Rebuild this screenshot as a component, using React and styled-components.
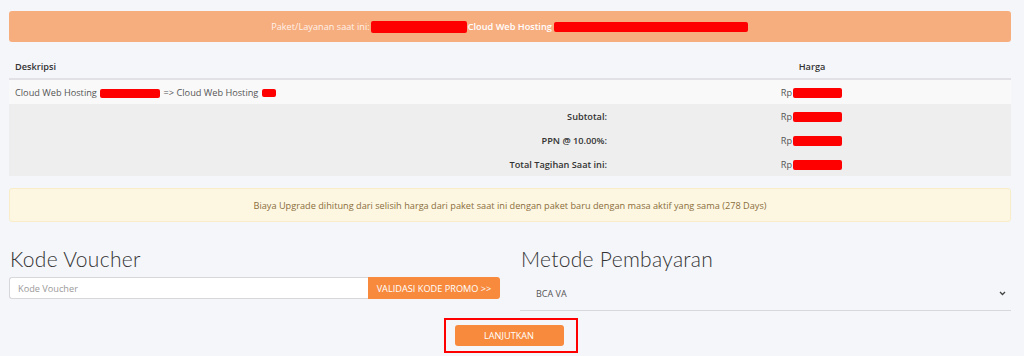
import styled, { createGlobalStyle } from "styled-components";

const Global = createGlobalStyle`
  body {
    margin: 0;
    background: #f5f6fa;
    font-family: "Open Sans", "Liberation Sans", sans-serif;
    color: #555;
  }
`;

const Page = styled.div`
  width: 1002px;
  margin: 0 0 0 9px;
  padding-top: 11px;
`;

const Banner = styled.div`
  height: 31px;
  background: #f7ae7f;
  border-radius: 3px;
  display: flex;
  align-items: center;
  justify-content: center;
  font-size: 9.2px;
  color: rgba(255, 255, 255, 0.85);
  b {
    color: #fff;
    font-weight: 600;
  }
`;

const Redact = styled.span`
  display: inline-block;
  width: ${(p) => p.w}px;
  height: ${(p) => p.h || 10}px;
  background: #ff0000;
  border-radius: 2px;
  vertical-align: middle;
  margin: 0 ${(p) => p.mr || 1}px 0 ${(p) => p.ml || 1}px;
`;

const Table = styled.table`
  width: 100%;
  margin-top: 13px;
  border-collapse: collapse;
  font-size: 9.2px;
  color: #444;
`;

const Th = styled.th`
  height: 23px;
  padding: 0 6px;
  font-weight: 600;
  color: #333;
  text-align: ${(p) => p.align || "left"};
  border-bottom: 2px solid #e2e2e6;
  width: ${(p) => p.w || "auto"};
`;

const Row = styled.tr`
  background: ${(p) => (p.shade ? "#eeeeee" : "#f9f9f9")};
`;

const Td = styled.td`
  height: 24px;
  padding: 0 6px;
  text-align: ${(p) => p.align || "left"};
  font-weight: ${(p) => (p.bold ? 600 : 400)};
  color: ${(p) => (p.bold ? "#333" : "#555")};
`;

const Alert = styled.div`
  margin-top: 12px;
  height: 32px;
  background: #fdf7e2;
  border: 1px solid #f9edc9;
  border-radius: 3px;
  display: flex;
  align-items: center;
  justify-content: center;
  font-size: 9.2px;
  color: #8a6d3b;
`;

const Columns = styled.div`
  display: grid;
  grid-template-columns: 1fr 1fr;
  column-gap: 20px;
  margin-top: 22px;
  align-items: start;
`;

const Heading = styled.h2`
  margin: 0 0 3px 1px;
  font-family: "Lato", "Liberation Sans", sans-serif;
  font-weight: 300;
  font-size: 21px;
  line-height: 30px;
  color: #333;
  letter-spacing: 0.3px;
`;

const InputGroup = styled.div`
  display: flex;
  height: 22px;
`;

const Input = styled.input`
  flex: 1;
  min-width: 0;
  border: 1px solid #d7d7dc;
  border-right: none;
  border-radius: 3px 0 0 3px;
  background: #fff;
  padding: 0 8px;
  font-family: inherit;
  font-size: 9.2px;
  color: #555;
  &::placeholder {
    color: #999;
  }
`;

const OrangeButton = styled.button`
  border: none;
  background: #f78a3d;
  color: #fff;
  font-family: inherit;
  font-size: 9.2px;
  text-transform: uppercase;
  border-radius: ${(p) => p.radius || "3px"};
  padding: 0;
  width: ${(p) => p.w}px;
  height: ${(p) => p.h}px;
  cursor: pointer;
`;

const Select = styled.div`
  height: 33px;
  border-bottom: 1px solid #d8d8dc;
  display: flex;
  align-items: center;
  justify-content: space-between;
  padding: 0 5px 0 16px;
  font-size: 9px;
  color: #555;
`;

const Footer = styled.div`
  display: flex;
  justify-content: center;
  margin-top: 7px;
`;

const Highlight = styled.div`
  border: 2px solid #ff0000;
  padding: 2px 12px 5px 9px;
  margin-left: 1px;
`;

export default function App() {
  return (
    <Page>
      <Global />
      <Banner>
        Paket/Layanan saat ini:
        <Redact w={96} h={12} />
        <b>Cloud Web Hosting</b>
        <Redact w={194} h={10} ml={2} />
      </Banner>

      <Table>
        <thead>
          <tr>
            <Th w="592px">Deskripsi</Th>
            <Th align="center">Harga</Th>
          </tr>
        </thead>
        <tbody>
          <Row>
            <Td>
              Cloud Web Hosting <Redact w={60} h={9} /> =&gt; Cloud Web Hosting <Redact w={14} h={8} />
            </Td>
            <Td align="center">
              Rp<Redact w={49} />
            </Td>
          </Row>
          <Row shade>
            <Td align="right" bold>Subtotal:</Td>
            <Td align="center">
              Rp<Redact w={49} />
            </Td>
          </Row>
          <Row shade>
            <Td align="right" bold>PPN @ 10.00%:</Td>
            <Td align="center">
              Rp<Redact w={49} />
            </Td>
          </Row>
          <Row shade>
            <Td align="right" bold>Total Tagihan Saat ini:</Td>
            <Td align="center">
              Rp<Redact w={49} />
            </Td>
          </Row>
        </tbody>
      </Table>

      <Alert>
        Biaya Upgrade dihitung dari selisih harga dari paket saat ini dengan paket baru dengan masa aktif yang sama (278 Days)
      </Alert>

      <Columns>
        <div>
          <Heading>Kode Voucher</Heading>
          <InputGroup>
            <Input placeholder="Kode Voucher" />
            <OrangeButton w={132} h={22} radius="0 3px 3px 0">
              Validasi Kode Promo &gt;&gt;
            </OrangeButton>
          </InputGroup>
        </div>
        <div>
          <Heading>Metode Pembayaran</Heading>
          <Select>
            <span>BCA VA</span>
            <svg width="7" height="5" viewBox="0 0 7 5">
              <path d="M1 1l2.5 2.5L6 1" fill="none" stroke="#444" strokeWidth="1.3" />
            </svg>
          </Select>
        </div>
      </Columns>

      <Footer>
        <Highlight>
          <OrangeButton w={109} h={21}>Lanjutkan</OrangeButton>
        </Highlight>
      </Footer>
    </Page>
  );
}
